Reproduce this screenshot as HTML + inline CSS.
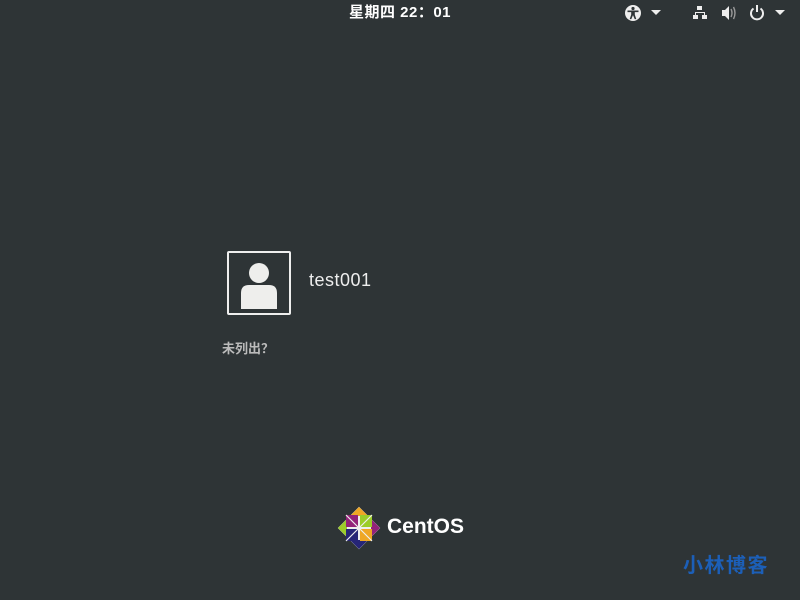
<!DOCTYPE html>
<html><head><meta charset="utf-8"><style>
body{margin:0;width:800px;height:600px;background:#2e3436;position:relative;overflow:hidden;font-family:"Liberation Sans","Noto Sans CJK SC",sans-serif;}
.a{position:absolute;}
</style></head><body>
<div class="a" style="left:0;top:0;width:800px;height:26px;text-align:center;color:#fff;font-size:15px;font-weight:bold;line-height:26px;letter-spacing:0.5px;">星期四 22：01</div>
<svg class="a" style="top:0;left:620px" width="180" height="26" viewBox="620 0 180 26">
<circle cx="633" cy="13" r="8" fill="#eee"/>
<circle cx="633" cy="8.5" r="1.6" fill="#2e3436"/>
<path d="M627.5 10.5h11v1.6h-3.7v2.5l1.5 4.5h-1.6l-1.7-4h0l-1.7 4h-1.6l1.5-4.5v-2.5h-3.7z" fill="#2e3436"/>
<path d="M651 10h10l-5 5z" fill="#eee"/>
<path d="M697 6h5v4h-2v2h5v3h2v4h-5v-4h2v-2h-8v2h2v4h-5v-4h2v-3h5v-2h-3z" fill="#eee"/>
<path d="M722 10h3l4-4v14l-4-4h-3z" fill="#eee"/>
<path d="M731 9q2 4 0 8M733.5 7q3 6 0 12" stroke="#999" stroke-width="1.4" fill="none"/>
<path d="M753.5 8.5a6 6 0 1 0 7 0" stroke="#eee" stroke-width="2" fill="none"/>
<path d="M757 5v7" stroke="#eee" stroke-width="2"/>
<path d="M775 10h10l-5 5z" fill="#eee"/>
</svg>
<div class="a" style="left:227px;top:251px;width:60px;height:60px;border:2px solid #eee;border-radius:2px;"></div>
<svg class="a" style="left:229px;top:253px" width="60" height="60">
<circle cx="30" cy="20" r="10" fill="#eeeeec"/>
<path d="M12 56v-16q0-8 8-8h20q8 0 8 8v16z" fill="#eeeeec"/>
</svg>
<div class="a" style="left:309px;top:270px;color:#eee;font-size:18px;letter-spacing:0.5px;">test001</div>
<div class="a" style="left:222px;top:338px;color:#bbb;font-size:13px;font-weight:bold;font-family:'Noto Sans CJK SC',sans-serif;">未列出？</div>
<svg class="a" style="left:337px;top:506px" width="44" height="44" viewBox="0 0 44 44">
<rect x="7" y="7" width="30" height="30" transform="rotate(45 22 22)" fill="#eee"/>
<path d="M1 22L10 13V31z" fill="#9ccd2a"/>
<path d="M22 1L31 10H13z" fill="#efa724"/>
<path d="M43 22L34 31V13z" fill="#932279"/>
<path d="M22 43L13 34H31z" fill="#262577"/>
<rect x="9" y="9" width="12" height="12" fill="#932279"/>
<rect x="23" y="9" width="12" height="12" fill="#9ccd2a"/>
<rect x="23" y="23" width="12" height="12" fill="#efa724"/>
<rect x="9" y="23" width="12" height="12" fill="#262577"/>
<path d="M9 9L21 21M35 9L23 21M35 35L23 23M9 35L21 23" stroke="#eee" stroke-width="1.2"/>
</svg>
<div class="a" style="left:387px;top:515px;color:#fff;font-size:21px;font-weight:bold;">CentOS</div>
<div class="a" style="left:683px;top:549px;color:#1c5fb8;font-size:20px;font-weight:bold;letter-spacing:1.5px;">小林博客</div>
</body></html>
